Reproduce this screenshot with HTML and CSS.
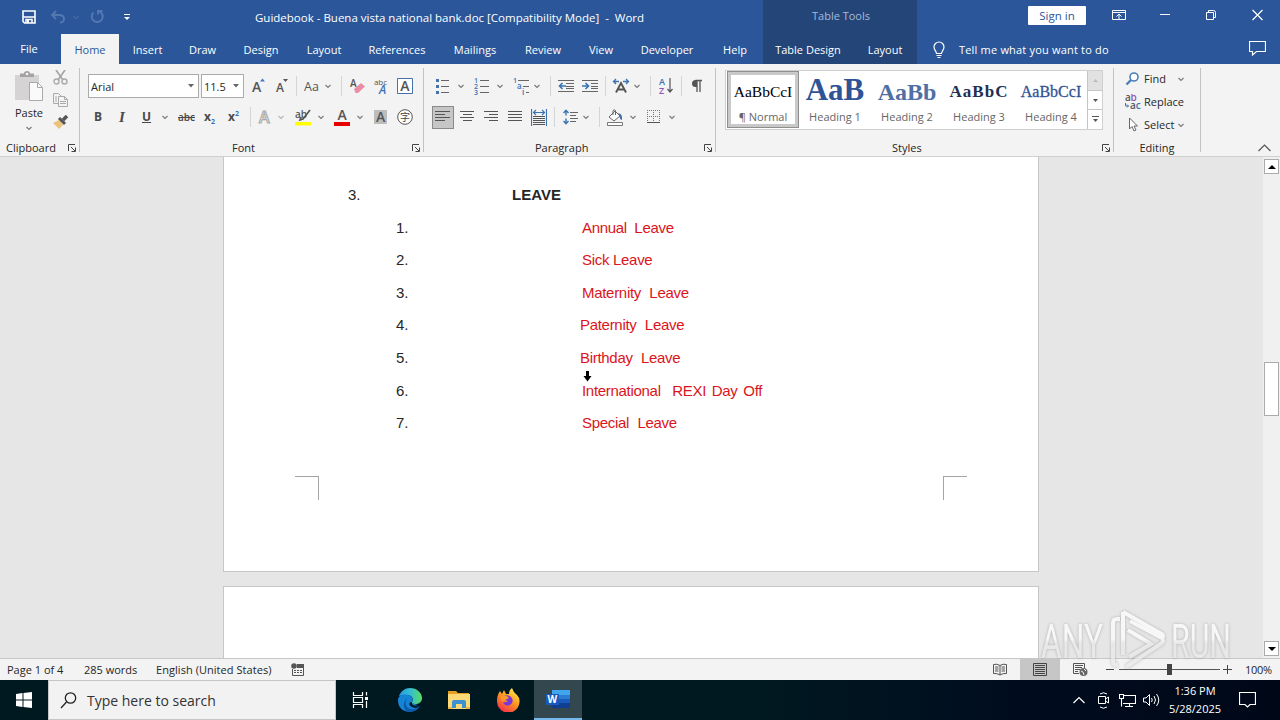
FILE: index.html
```html
<!DOCTYPE html>
<html lang="en">
<head>
  <meta charset="UTF-8">
  <meta name="viewport" content="width=device-width, initial-scale=1.0">
  <title>Guidebook - Buena vista national bank.doc - Word</title>
  <link rel="stylesheet" href="styles.css">
</head>
<body>
  <svg class="defs" width="0" height="0">
    <symbol id="caret" viewBox="0 0 8 8"><path d="M1.5 3l2.500 2.500L6.500 3" fill="none" stroke="#777" stroke-width="1.1"/></symbol>
    <symbol id="launcher" viewBox="0 0 8 8"><path d="M.5 7V.5H7M3 3l4 4M7.500 3.500v4h-4" fill="none" stroke="#444"/></symbol>
  </svg>

  <header class="header">
    <div class="titlebar">
      <div class="quick-access">
        <svg width="14" height="14" viewBox="0 0 14 14"><path d="M1 1h12v12H2.500L1 11.500z" fill="none" stroke="#fff" stroke-width="1.600"/><path d="M1 7h12M4 13V9.500h6V13" fill="none" stroke="#fff" stroke-width="1.500"/><path d="M5 10h2v3H5z" fill="#fff"/></svg>
        <svg width="14" height="14" viewBox="0 0 14 14"><path d="M5 1L1 5l4 4M1 5h7c3 0 5 1.500 5 4s-2 3.500-4 3.500" fill="none" stroke="#5578b3" stroke-width="1.900"/></svg>
        <svg width="8" height="8" viewBox="0 0 8 8"><path d="M1.500 3L4 5.500 6.500 3" fill="none" stroke="#5578b3"/></svg>
        <svg width="14" height="14" viewBox="0 0 14 14"><path d="M8 4.500V1h4.500M3.500 2.500a5.500 5.500 0 1 0 7.500 0L8.500 1" fill="none" stroke="#5578b3" stroke-width="1.900"/></svg>
        <svg width="8" height="8" viewBox="0 0 8 8"><path d="M1 1.500h6" stroke="#fff"/><path d="M1 4h6L4 7z" fill="#fff"/></svg>
      </div>
      <div class="doc-title">Guidebook - Buena vista national bank.doc [Compatibility Mode] &nbsp;- &nbsp;Word</div>
      <div class="table-tools">Table Tools</div>
      <div class="window-buttons">
        <button class="sign-in">Sign in</button>
        <svg width="14" height="12" viewBox="0 0 14 12"><path d="M.5 1.500h13v9H.5zM.5 3.500h13M7 10V5.500M4.500 7.500L7 5l2.500 2.500" fill="none" stroke="#fff"/></svg>
        <svg width="10" height="12" viewBox="0 0 10 12"><path d="M0 5.500h10" stroke="#fff"/></svg>
        <svg width="10" height="12" viewBox="0 0 10 12"><path d="M.5 3.500h7v7h-7zM2.500 3.500v-2h5q2 0 2 2v5h-2" fill="none" stroke="#fff"/></svg>
        <svg width="11" height="12" viewBox="0 0 11 12"><path d="M.5 1l10 10M10.500 1L.5 11" stroke="#fff" stroke-width="1.200"/></svg>
      </div>
    </div>
    <nav class="tabs">
      <a class="tab file">File</a>
      <a class="tab active">Home</a>
      <a class="tab">Insert</a>
      <a class="tab">Draw</a>
      <a class="tab">Design</a>
      <a class="tab">Layout</a>
      <a class="tab">References</a>
      <a class="tab">Mailings</a>
      <a class="tab">Review</a>
      <a class="tab">View</a>
      <a class="tab">Developer</a>
      <a class="tab">Help</a>
      <a class="tab context">Table Design</a>
      <a class="tab context">Layout</a>
      <div class="tell-me">
        <svg width="12" height="18" viewBox="0 0 12 18"><path d="M3.500 12.500c0-2-2.500-3.500-2.500-6.500a5 5 0 0 1 10 0c0 3-2.500 4.500-2.500 6.500zM3.500 14.500h5M4.500 16.500h3" fill="none" stroke="#fff" stroke-width="1.200"/></svg>
        <span>Tell me what you want to do</span>
      </div>
      <svg class="comment" width="17" height="15" viewBox="0 0 17 15"><path d="M.5.5h16v10H7.500l-4 3.500v-3.500h-3z" fill="none" stroke="#fff" stroke-width="1.200"/></svg>
    </nav>
  </header>

  <section class="ribbon">
    <div class="group clipboard">
      <div class="group-body">
        <div class="paste">
          <svg width="29" height="32" viewBox="0 0 29 32"><path d="M0 4h24v25H0z" fill="#d5d3d4"/><path d="M5 6V2.500h4Q9 0 12 0t3 2.500h4V6z" fill="#a3a3a3"/><circle cx="12" cy="3" r="1.300" fill="#f3f3f3"/><path d="M14.500 11.500h8l5 5v13h-13z" fill="#fafafa" stroke="#aaa"/><path d="M22.500 11.500v5h5" fill="none" stroke="#aaa"/></svg>
          <span>Paste</span>
          <svg width="8" height="8"><use href="#caret"/></svg>
        </div>
        <div class="clip-tools">
          <svg width="15" height="15" viewBox="0 0 15 15"><path d="M3 0l7 10M12 0L5 10" stroke="#a5a5a5" stroke-width="1.700"/><circle cx="3.500" cy="11.500" r="2.500" fill="none" stroke="#aaa" stroke-width="1.400"/><circle cx="11.500" cy="11.500" r="2.500" fill="none" stroke="#aaa" stroke-width="1.400"/></svg>
          <svg width="15" height="14" viewBox="0 0 15 14"><path d="M5.500 10.500h-5v-10h5l2.500 2.500M2 4h2M2 6h2M2 8h2M5.500 3.500h6l3 3v7h-9zM11.500 3.500v3h3M7 8.500h6M7 10.500h6" fill="none" stroke="#aaa"/></svg>
          <svg width="16" height="14" viewBox="0 0 16 14"><path d="M0 8l6-3 4 5-4 4z" fill="#efc27b"/><path d="M6 3l6 6" stroke="#555" stroke-width="3"/><path d="M10 5l4-4" stroke="#555" stroke-width="3.500"/></svg>
        </div>
      </div>
      <div class="group-label">Clipboard<svg width="8" height="8"><use href="#launcher"/></svg></div>
    </div>

    <div class="group font">
      <div class="tools font-top">
        <div class="combo">Arial<svg width="6" height="4"><path d="M0 0h6L3 3.500z" fill="#666"/></svg></div>
        <div class="combo size">11.5<svg width="6" height="4"><path d="M0 0h6L3 3.500z" fill="#666"/></svg></div>
        <svg width="16" height="18" viewBox="0 0 16 18"><text class="glyph" x="1" y="15" font-size="14">A</text><path d="M9 4.500h5l-2.500-3z" fill="#4472c4"/></svg>
        <svg width="16" height="18" viewBox="0 0 16 18"><text class="glyph" x="1" y="15" font-size="12">A</text><path d="M8 2h5l-2.500 3z" fill="#555"/></svg>
        <i class="sep"></i>
        <span class="change-case">Aa</span>
        <svg width="8" height="8"><use href="#caret"/></svg>
        <i class="sep"></i>
        <svg width="16" height="18" viewBox="0 0 16 18"><text class="glyph" x="0" y="10" font-size="10">A</text><path d="M4 12l7-6 4 3.500-7 6.500H5.500z" fill="#eb8ea5"/></svg>
        <svg width="16" height="20" viewBox="0 0 16 20"><text class="glyph thin" x="1" y="9" font-size="8" textLength="13">abc</text><text class="glyph blue" x="6" y="18" font-size="12" font-style="italic">A</text></svg>
        <svg width="16" height="18" viewBox="0 0 16 18"><path d="M.5 1.500h15v15H.5z" fill="#fff" stroke="#4472a8"/><text class="glyph" x="3.300" y="14" font-size="14">A</text></svg>
      </div>
      <div class="tools font-bottom">
        <b class="fmt">B</b>
        <i class="fmt serif">I</i>
        <u class="fmt">U</u>
        <svg width="8" height="8"><use href="#caret"/></svg>
        <s class="fmt strike">abc</s>
        <span class="fmt">x<sub>2</sub></span>
        <span class="fmt">x<sup>2</sup></span>
        <i class="sep"></i>
        <svg width="14" height="16" viewBox="0 0 14 16"><text x="1" y="13.500" font-family="Open Sans" font-weight="600" font-size="16" fill="#f8f8f8" stroke="#aaa" stroke-width="1.100">A</text></svg>
        <svg class="faded" width="8" height="8"><use href="#caret"/></svg>
        <svg width="17" height="18" viewBox="0 0 17 18"><text class="glyph" x="0" y="10" font-size="10">ab</text><path d="M15 2L8 11l-3 1 1-3" fill="none" stroke="#555" stroke-width="1.700"/><path d="M0 14h16v3.500H0z" fill="#ff0"/></svg>
        <svg width="8" height="8"><use href="#caret"/></svg>
        <svg width="16" height="18" viewBox="0 0 16 18"><text class="glyph" x="3.500" y="12" font-size="14">A</text><path d="M0 14h16v4H0z" fill="#e60000"/></svg>
        <svg width="8" height="8"><use href="#caret"/></svg>
        <svg width="15" height="16" viewBox="0 0 15 16"><path d="M1 1h13v14H1z" fill="#bdbdbd"/><text class="glyph" x="3" y="13" font-size="14">A</text></svg>
        <svg width="16" height="16" viewBox="0 0 16 16"><circle cx="8" cy="8" r="7.300" fill="#fff" stroke="#555"/><text x="3" y="12" font-family="Noto Sans CJK SC, sans-serif" font-size="10" fill="#444">字</text></svg>
      </div>
      <div class="group-label">Font<svg width="8" height="8"><use href="#launcher"/></svg></div>
    </div>

    <div class="group paragraph">
      <div class="tools para-top">
        <svg width="16" height="16" viewBox="0 0 16 16"><path d="M2 1h3v3H2zM2 7h3v3H2zM2 13h3v3H2z" fill="#4472a8"/><path d="M7 2.500h8M7 8.500h8M7 14.500h8" stroke="#666"/></svg>
        <svg width="8" height="8"><use href="#caret"/></svg>
        <svg width="16" height="18" viewBox="0 0 16 18"><text class="glyph blue" x="1" y="6" font-size="7">1</text><text class="glyph blue" x="1" y="12" font-size="7">2</text><text class="glyph blue" x="1" y="18" font-size="7">3</text><path d="M7 3.500h9M7 9.500h9M7 15.500h9" stroke="#666"/></svg>
        <svg width="8" height="8"><use href="#caret"/></svg>
        <svg width="18" height="18" viewBox="0 0 18 18"><text class="glyph blue" x="0" y="6" font-size="7">1</text><text class="glyph blue" x="4" y="12" font-size="8">a</text><text class="glyph blue" x="9" y="18" font-size="8">i</text><path d="M5 3.500h11M10 9.500h6M13 15.500h3" stroke="#666"/></svg>
        <svg width="8" height="8"><use href="#caret"/></svg>
        <i class="sep"></i>
        <svg width="16" height="14" viewBox="0 0 16 14"><path d="M0 1.500h16M8 4.500h8M8 7.500h8M8 9.500h8M0 12.500h16" stroke="#666"/><path d="M8 7H1.500M4.500 4l-3 3 3 3" fill="none" stroke="#3973b5" stroke-width="1.600"/></svg>
        <svg width="16" height="14" viewBox="0 0 16 14"><path d="M0 1.500h16M9 4.500h7M9 7.500h7M9 9.500h7M0 12.500h16" stroke="#666"/><path d="M0 7h6.500M3.500 4l3 3-3 3" fill="none" stroke="#3973b5" stroke-width="1.600"/></svg>
        <i class="sep"></i>
        <svg width="18" height="16" viewBox="0 0 18 16"><path d="M4 14.500L9 5l5 9.500M5.500 11.500h7" fill="none" stroke="#555" stroke-width="1.900"/><path d="M7 3.500H2M4 1L1.500 3.500 4 6M11 3.500h5M14 1l2.500 2.500L14 6" fill="none" stroke="#3973b5" stroke-width="1.300"/></svg>
        <svg width="8" height="8"><use href="#caret"/></svg>
        <i class="sep"></i>
        <svg width="16" height="18" viewBox="0 0 16 18"><text class="glyph blue" x="1" y="8" font-size="9">A</text><text class="glyph purple" x="1" y="17" font-size="9">Z</text><path d="M12 1v14M9.500 12l2.500 3 2.500-3" fill="none" stroke="#555" stroke-width="1.200"/></svg>
        <i class="sep"></i>
        <svg width="12" height="14" viewBox="0 0 12 14"><path d="M6 1v12M9 1v12M11 1.500H4.500" fill="none" stroke="#555" stroke-width="1.300"/><path d="M6 1H4.500a3.500 3.500 0 0 0 0 7H6z" fill="#555"/></svg>
      </div>
      <div class="tools para-bottom">
        <div class="pressed"><svg width="16" height="12" viewBox="0 0 16 12"><path d="M0 .5h15M0 3.500h10M0 6.500h15M0 9.500h10" stroke="#555"/></svg></div>
        <svg width="15" height="12" viewBox="0 0 15 12"><path d="M0 .5h14M3 3.500h9M0 6.500h14M3 9.500h9" stroke="#555"/></svg>
        <svg width="15" height="12" viewBox="0 0 15 12"><path d="M0 .5h14M5 3.500h9M0 6.500h14M5 9.500h9" stroke="#555"/></svg>
        <svg width="15" height="12" viewBox="0 0 15 12"><path d="M0 .5h14M0 3.500h14M0 6.500h14M0 9.500h14" stroke="#555"/></svg>
        <svg width="16" height="17" viewBox="0 0 16 17"><path d="M.5 0v17M15.500 0v17M2.500 3.500h11M5 1L2.500 3.500 5 6M11 1l2.500 2.500L11 6" fill="none" stroke="#3973b5" stroke-width="1.200"/><path d="M2 7.500h12M2 9.500h12M2 11.500h12M2 13.500h12M2 15.500h12" stroke="#555"/></svg>
        <i class="sep"></i>
        <svg width="15" height="16" viewBox="0 0 15 16"><path d="M3 1v5.500M.5 4L3 1.200 5.500 4M3 9.500V15M.5 12L3 14.800 5.500 12" fill="none" stroke="#3973b5" stroke-width="1.400"/><path d="M7 3.500h8M7 6.500h6M7 9.500h8M7 12.500h6" stroke="#666"/></svg>
        <svg width="8" height="8"><use href="#caret"/></svg>
        <i class="sep"></i>
        <svg width="17" height="17" viewBox="0 0 17 17"><path d="M2 8l6-6 5 5-6 5zM6 6V1.500Q7 0 8.500 1.500V6" fill="#fff" stroke="#666"/><path d="M11 4q5 1 4 7-3-1-2-4z" fill="#4472a8"/><path d="M.5 13.500h15v3H.5z" fill="#fff" stroke="#777"/></svg>
        <svg width="8" height="8"><use href="#caret"/></svg>
        <svg width="14" height="14" viewBox="0 0 14 14"><path d="M.5 0v13M12.500 0v13M0 .5h13M6.500 0v13M0 6.500h13" stroke="#777" stroke-dasharray="1 1"/><path d="M0 12.500h13" stroke="#555"/></svg>
        <svg width="8" height="8"><use href="#caret"/></svg>
      </div>
      <div class="group-label">Paragraph<svg width="8" height="8"><use href="#launcher"/></svg></div>
    </div>

    <div class="group styles">
      <div class="gallery">
        <div class="style selected"><span class="preview normal">AaBbCcI</span><span class="name">¶ Normal</span></div>
        <div class="style"><span class="preview h1">AaB</span><span class="name">Heading 1</span></div>
        <div class="style"><span class="preview h2">AaBb</span><span class="name">Heading 2</span></div>
        <div class="style"><span class="preview h3">AaBbC</span><span class="name">Heading 3</span></div>
        <div class="style"><span class="preview h4">AaBbCcI</span><span class="name">Heading 4</span></div>
        <div class="gallery-scroll">
          <div class="off"><svg width="5" height="3"><path d="M0 3h5L2.500 0z" fill="#bbb"/></svg></div>
          <div><svg width="5" height="3"><path d="M0 0h5L2.500 3z" fill="#555"/></svg></div>
          <div><svg width="7" height="7"><path d="M0 .5h7" stroke="#555"/><path d="M1 3h5L3.500 6z" fill="#555"/></svg></div>
        </div>
      </div>
      <div class="group-label">Styles<svg width="8" height="8"><use href="#launcher"/></svg></div>
    </div>

    <div class="group editing">
      <div class="edit-list">
        <div class="edit-item find"><svg width="16" height="14" viewBox="0 0 16 14"><circle cx="9" cy="5" r="4" fill="#fff" stroke="#4a7ebb" stroke-width="1.600"/><path d="M6 8l-4.500 4.500" stroke="#4a7ebb" stroke-width="2.400"/></svg><span>Find</span><svg width="8" height="8"><use href="#caret"/></svg></div>
        <div class="edit-item replace"><svg width="16" height="16" viewBox="0 0 16 16"><text class="glyph" x="0" y="7" font-size="10">a</text><text class="glyph purple" x="5.500" y="7" font-size="10">b</text><text class="glyph" x="5" y="15" font-size="10">a</text><text class="glyph blue" x="10.800" y="15" font-size="10">c</text><path d="M.5 9v3h3M2 10.500L3.500 12 2 13.500" fill="none" stroke="#3973b5"/></svg><span>Replace</span></div>
        <div class="edit-item select"><svg width="16" height="15" viewBox="0 0 16 15"><path d="M4.500 1v11l2.500-2.500 2 4.500 2-1-2-4h3.500z" fill="#fff" stroke="#666"/></svg><span>Select</span><svg width="8" height="8"><use href="#caret"/></svg></div>
      </div>
      <div class="group-label">Editing</div>
    </div>
    <svg class="collapse" width="13" height="8" viewBox="0 0 13 8"><path d="M.5 7l6-6 6 6" fill="none" stroke="#555" stroke-width="1.200"/></svg>
  </section>

  <main class="workspace">
    <div class="canvas">
      <article class="page first">
        <div class="line heading"><span class="num">3.</span><span>LEAVE</span></div>
        <div class="line item annual"><span class="num">1.</span><span>Annual Leave</span></div>
        <div class="line item sick"><span class="num">2.</span><span>Sick Leave</span></div>
        <div class="line item"><span class="num">3.</span><span>Maternity Leave</span></div>
        <div class="line item outdent"><span class="num">4.</span><span>Paternity Leave</span></div>
        <div class="line item outdent"><span class="num">5.</span><span>Birthday Leave</span></div>
        <div class="line item international"><span class="num">6.</span><span>International&nbsp; REXI Day Off</span></div>
        <div class="line item"><span class="num">7.</span><span>Special Leave</span></div>
        <div class="crop-marks"><i class="mark left"></i><i class="mark right"></i></div>
        <svg class="pointer" width="9" height="11" viewBox="0 0 9 11"><path d="M3 0h3v5h2.500L4.500 10.500.5 5H3z"/></svg>
      </article>
      <article class="page"></article>
    </div>
    <div class="scrollbar">
      <div class="arrow"><svg width="8" height="4"><path d="M0 4h8L4 0z"/></svg></div>
      <div class="thumb"></div>
      <div class="arrow"><svg width="8" height="4"><path d="M0 0h8L4 4z"/></svg></div>
    </div>
  </main>

  <footer class="statusbar">
    <span class="page-count">Page 1 of 4</span>
    <span class="words">285 words</span>
    <span class="language">English (United States)</span>
    <svg class="macro" width="14" height="14" viewBox="0 0 14 14"><path d="M6 1h7v4H6z" fill="#555"/><path d="M1.500 6v6.500h11V4" fill="none" stroke="#555"/><circle cx="3" cy="3" r="2.800" fill="#555"/><path d="M3 7.500h9M3 9.500h9" stroke="#555" stroke-dasharray="2 1"/></svg>
    <div class="views">
      <div class="view"><svg width="14" height="13" viewBox="0 0 14 13"><path d="M7 2.500Q4 .5.500 1.500v9Q4 10 7 12q3-2 6.500-1.500v-9Q10 .5 7 2.500V12M2 4h3.500M2 6h3.500M2 8h3.500M8.500 4H12M8.500 6H12M8.500 8H12" fill="none" stroke="#555"/></svg></div>
      <div class="view on"><svg width="14" height="13" viewBox="0 0 14 13"><path d="M.5.500h13v12H.5zM2 2.500h10M2 4.500h10M2 6.500h10M2 8.500h10M2 10.500h10" fill="none" stroke="#444"/></svg></div>
      <div class="view"><svg width="15" height="13" viewBox="0 0 15 13"><path d="M6 10.500H.5V.5h11V5M2 2.500h8M2 4.500h7M2 6.500h5M2 8.500h3" fill="none" stroke="#555"/><circle cx="10.500" cy="9" r="4" fill="#666"/><path d="M8 8l2 1 1 3M11 6l2 2" stroke="#eee" fill="none"/></svg></div>
    </div>
    <div class="zoom">
      <svg width="8" height="9"><path d="M0 4.500h8" stroke="#444"/></svg>
      <div class="slider"><i class="handle"></i></div>
      <svg width="9" height="9"><path d="M0 4.500h9M4.500 0v9" stroke="#444"/></svg>
      <span>100%</span>
    </div>
  </footer>

  <footer class="taskbar">
    <div class="start"><svg width="16" height="16" viewBox="0 0 16 16"><path d="M0 2l6.500-1v6.500H0zM7.500 1L16 0v7.500H7.500zM0 8.500h6.500V15L0 14zM7.500 8.500H16V16l-8.500-1z" fill="#fff"/></svg></div>
    <div class="search"><svg width="17" height="17" viewBox="0 0 17 17"><circle cx="10.500" cy="6" r="5.200" fill="none" stroke="#222" stroke-width="1.300"/><path d="M6.500 10L1 16" stroke="#222" stroke-width="1.300"/></svg><span>Type here to search</span></div>
    <div class="app"><svg width="17" height="16" viewBox="0 0 17 16"><path d="M1.500 0v3.500h9V0M1.500 16v-3.500h9V16M1.500 5.500h9v5h-9zM14.500 0v3.500M14.500 9v7" fill="none" stroke="#fff" stroke-width="1.200"/><path d="M13 5h3v3h-3z" fill="#fff"/></svg></div>
    <div class="app"><svg width="24" height="24" viewBox="0 0 24 24">
      <defs><linearGradient id="edge-top"><stop offset="0" stop-color="#2a9be0"/><stop offset=".5" stop-color="#35bdcf"/><stop offset="1" stop-color="#5bdb62"/></linearGradient></defs>
      <path d="M1 8C3 3 7 0 12 0c7 0 12 5 12 10 0 4-3 6-7 6-3 0-4-1-3-2 2-3 0-7-5-7-4 0-7 1-8 1z" fill="url(#edge-top)"/><path d="M0 12C0 8 4 6 8 6.500c5 .5 8 4 6 7.500-1 1 0 2 3 2l5 2c-4 6-10 7-15 5C2 21 0 17 0 12z" fill="#1583d6"/><path d="M10 10c-3 2-3 6-1 9 3 3 8 3 13-1-2 4-7 6.500-12 6-5-2-6-11 0-14z" fill="#0d5aa8"/><path d="M14 14c-1 2 1 3.500 4 3.500 2 0 4-1 5-2l-1.500 3c-3 2-7 1.500-9-.5-2-2-1-4 1.500-4z" fill="#001820"/></svg></div>
    <div class="app"><svg width="22" height="18" viewBox="0 0 22 18"><path d="M0 0h8l2 2h11v4H0z" fill="#e5a020"/><path d="M0 3h22v15H0z" fill="#fbd977"/><path d="M4 17v-6q0-2 2-2h10q2 0 2 2v6h-4v-4H8v4z" fill="#3d91d0"/><path d="M0 16h4v2H0zM18 16h4v2h-4z" fill="#efb83e"/></svg></div>
    <div class="app"><svg width="24" height="24" viewBox="0 0 24 24">
      <defs><linearGradient id="fox" x1=".8" y1="0" x2=".2" y2="1"><stop offset="0" stop-color="#fff14f"/><stop offset=".45" stop-color="#ff9a1f"/><stop offset="1" stop-color="#f3264f"/></linearGradient></defs>
      <path d="M4 3l2 3 2-4 2 4 3 0q0-4 3-6 1 4 5 7 3 3 2.500 7A11 11 0 0 1 1 13Q1 7 4 3z" fill="url(#fox)"/><path d="M8 8q5-2 8 2 2 5-2 7-5 2-7-3 3 1 5-1-3 0-4-5z" fill="#7a38d6"/><path d="M5 9q2-2 6-1l2 2q-2 1-4 2-2 3-4 0z" fill="#ff9a2a"/></svg></div>
    <div class="app running"><svg width="24" height="20" viewBox="0 0 24 20"><path d="M6 1h18v6H6z" fill="#41a5ee"/><path d="M6 6h18v4H6z" fill="#2b7cd3"/><path d="M6 10h18v5H6z" fill="#185abd"/><path d="M6 14h18v5H6z" fill="#103f91"/><path d="M0 5h13v11H0z" fill="#185abd"/><text x="1.500" y="14" font-family="Open Sans" font-size="10" font-weight="700" fill="#fff">W</text></svg></div>
    <div class="tray">
      <svg width="12" height="8" viewBox="0 0 12 8"><path d="M.5 7L6 1.500 11.500 7" fill="none" stroke="#fff" stroke-width="1.200"/></svg>
      <svg width="12" height="17" viewBox="0 0 12 17"><path d="M.5 4.500h7v7h-7zM7.500 7l3-2v6l-3-2M2 2q3.500-2.500 7 0M2 15q3.500 2.500 7 0" fill="none" stroke="#fff"/></svg>
      <svg width="17" height="15" viewBox="0 0 17 15"><path d="M5 2.500h11.500v8H4M.5 1.500h4v4h-4zM2.500 5.500v8M10.500 10.500v3M6 13.500h8" fill="none" stroke="#fff" stroke-width="1.100"/></svg>
      <svg width="17" height="14" viewBox="0 0 17 14"><path d="M.5 5v4h2.500l3.500 3.500v-11L3 5zM8.500 5q1.500 2 0 4M11 3q3 4 0 8M13.500 1q4.500 6 0 12" fill="none" stroke="#fff"/></svg>
      <div class="clock"><span>1:36 PM</span><span>5/28/2025</span></div>
      <svg width="17" height="16" viewBox="0 0 17 16"><path d="M.5.5h16v12H11L8.500 15 6 12.500H.5z" fill="none" stroke="#fff" stroke-width="1.200"/></svg>
    </div>
  </footer>

  <svg class="watermark" width="200" height="70" viewBox="0 0 200 70">
    <defs><linearGradient id="fade" gradientUnits="userSpaceOnUse" x1="0" y1="30" x2="0" y2="34"><stop offset="0" stop-color="#fff"/><stop offset="1" stop-color="#e9e9e9"/></linearGradient></defs>
    <text x="3" y="49" textLength="62" lengthAdjust="spacingAndGlyphs">ANY</text>
    <path d="M82 10h-3q-4 0-4 4v38q0 4 5 4M85 3v43M85 3l39 22q2 2 0 4l-32-17M124 30q2 2 0 4L88 58M91 48l22-13L90 21"/>
    <text x="133" y="49" textLength="60" lengthAdjust="spacingAndGlyphs">RUN</text>
  </svg>
</body>
</html>
```

FILE: styles.css
```css
* {
  box-sizing: border-box;
}

body {
  margin: 0;
  width: 1280px;
  height: 720px;
  overflow: hidden;
  position: relative;
  display: flex;
  flex-direction: column;
  font-family: "Open Sans", "Noto Sans", sans-serif;
  font-size: 11px;
  color: #262626;
}

svg {
  display: block;
  flex: none;
}

.defs {
  position: absolute;
}

/* Title bar and tabs */
.header {
  height: 64px;
  background: #2b579a;
  color: #fff;
}

.titlebar {
  height: 34px;
  display: flex;
}

.quick-access {
  width: 255px;
  padding-left: 22px;
  display: grid;
  grid-template-columns: 29px 21px 18px 33px 8px;
  align-items: center;
}

.doc-title {
  width: 508px;
  line-height: 35px;
  font-size: 11.5px;
  white-space: nowrap;
}

.table-tools {
  width: 154px;
  padding-left: 2px;
  background: #234578;
  color: #a6bbdc;
  text-align: center;
  line-height: 32px;
}

.window-buttons {
  padding: 0 0 4px 111px;
  display: grid;
  grid-template-columns: 84px 48px 46px 46px 11px;
  align-items: center;
}

.sign-in {
  width: 58px;
  height: 19px;
  padding: 0;
  border: none;
  border-radius: 1px;
  background: #fff;
  color: #2b579a;
  font: 11.5px "Open Sans", sans-serif;
}

.tabs {
  height: 30px;
  display: grid;
  grid-template-columns: 61px 58px 57px 53px 64px 62px 84px 72px 64px 52px 80px 56px 90px 64px 332px 17px;
}

.tab {
  text-align: center;
  line-height: 32px;
  white-space: nowrap;
}

.tab.file {
  padding-right: 3px;
  line-height: 30px;
}

.tab.active {
  background: #f3f3f3;
  color: #2b579a;
}

.tab.context {
  background: #234578;
}

.tell-me {
  display: flex;
  align-items: center;
  padding-left: 16px;
  gap: 14px;
  letter-spacing: 0.19px;
}

.tell-me span {
  padding-bottom: 2px;
}

.comment {
  margin-top: 7px;
}

/* Ribbon */
.ribbon {
  height: 93px;
  display: flex;
  background: #f3f3f3;
  border-bottom: 1px solid #d0d0d0;
}

.group {
  height: 84px;
  margin-top: 4px;
  border-right: 1px solid #c3c3c3;
  display: flex;
  flex-direction: column;
}

.group-label {
  margin-top: auto;
  margin-bottom: -4px;
  height: 16px;
  line-height: 16px;
  display: flex;
  align-items: center;
  justify-content: space-between;
  padding-right: 3px;
}

.clipboard {
  width: 80px;
}

.clipboard .group-label {
  padding-left: 6px;
}

.group-body {
  display: flex;
}

.paste {
  width: 53px;
  padding: 3px 0 0 5px;
  display: flex;
  flex-direction: column;
  align-items: center;
}

.paste span {
  line-height: 14px;
  margin: 3px 0 4px;
}

.clip-tools {
  padding-top: 2px;
  display: flex;
  flex-direction: column;
  gap: 8px;
}

.font {
  width: 344px;
}

.font .group-label {
  padding-left: 152px;
}

.tools {
  display: grid;
  align-items: center;
}

.font-top {
  margin: 6px 0 0 8px;
  height: 24px;
  grid-template-columns: 113px 50px 24px 21px 8px 20px 17px 9px 23px 24px 16px;
}

.combo {
  width: 111px;
  height: 24px;
  padding: 0 4px 0 2px;
  border: 1px solid #ababab;
  background: #fff;
  display: flex;
  align-items: center;
  justify-content: space-between;
}

.combo.size {
  width: 43px;
}

.sep {
  width: 1px;
  height: 20px;
  background: #d5d5d5;
}

.change-case {
  font-size: 12.5px;
  color: #555;
}

.glyph {
  font-family: "Open Sans", sans-serif;
  font-weight: 600;
  fill: #555;
}

.glyph.thin {
  font-weight: 400;
}

.glyph.blue {
  fill: #3973b5;
}

.glyph.purple {
  fill: #9455b5;
}

.font-bottom {
  margin: 7px 0 0 14px;
  height: 24px;
  grid-template-columns: 25px 23px 19px 17px 26px 24px 22px 8px 19px 18px 22px 17px 22px 17px 24px 16px;
}

.fmt {
  font-size: 12px;
  line-height: 16px;
  font-weight: 700;
  color: #4a4a4a;
}

.fmt.serif {
  font-family: "Liberation Serif", serif;
  font-size: 15px;
}

.fmt.strike {
  font-size: 10px;
  font-weight: 600;
}

.fmt sub,
.fmt sup {
  font-size: 7px;
  line-height: 0;
  color: #3973b5;
}

.faded {
  opacity: 0.5;
}

.paragraph {
  width: 292px;
}

.paragraph .group-label {
  padding-left: 111px;
}

.para-top {
  margin: 6px 0 0 10px;
  height: 24px;
  grid-template-columns: 23px 16px 23px 17px 20px 17px 8px 24px 23px 7px 21px 17px 8px 23px 10px 12px;
}

.para-bottom {
  margin: 7px 0 0 8px;
  height: 24px;
  grid-template-columns: 28px 24px 24px 23px 23px 9px 19px 17px 8px 22px 18px 21px 8px;
}

.pressed {
  width: 22px;
  height: 23px;
  border: 1px solid #8a8a8a;
  background: #c6c6c6;
  display: flex;
  align-items: center;
  justify-content: center;
}

.styles {
  width: 398px;
}

.styles .group-label {
  padding-left: 176px;
}

.gallery {
  margin: 2px 0 0 9px;
  width: 378px;
  height: 60px;
  padding-left: 1px;
  display: flex;
  background: #fff;
  border: 1px solid #d0d0d0;
}

.style {
  width: 72px;
  display: flex;
  flex-direction: column;
  align-items: center;
}

.style.selected {
  border: 1px solid #8f8f8f;
  box-shadow: inset 0 0 0 3px #c9c9c9;
  height: 57px;
}

.preview {
  height: 36px;
  line-height: 42px;
  font-family: "Liberation Serif", serif;
  white-space: nowrap;
}

.normal {
  font-size: 15.5px;
  color: #000;
  line-height: 40px;
}

.h1 {
  font-size: 31px;
  font-weight: 700;
  color: #2f5496;
  line-height: 37px;
}

.h2 {
  font-size: 24px;
  font-weight: 700;
  color: #4f6fa5;
}

.h3 {
  font-size: 17px;
  font-weight: 700;
  letter-spacing: 1px;
  color: #1f2f55;
}

.h4 {
  font-size: 16px;
  color: #2f5496;
  -webkit-text-stroke: 0.3px #2f5496;
}

.name {
  line-height: 17px;
  margin-top: 1px;
  color: #666;
  white-space: nowrap;
}

.selected .name {
  margin-top: 0;
}

.gallery-scroll {
  width: 15px;
  display: flex;
  flex-direction: column;
}

.gallery-scroll div {
  flex: 1;
  display: flex;
  align-items: center;
  justify-content: center;
  border-left: 1px solid #c6c6c6;
  border-top: 1px solid #c6c6c6;
}

.gallery-scroll .off {
  background: #e1e1e1;
  border-top: none;
}

.editing {
  width: 87px;
}

.editing .group-label {
  justify-content: center;
  padding-right: 0;
}

.edit-list {
  height: 68px;
  padding: 0 0 0 11px;
  margin-top: -1px;
}

.edit-item {
  height: 23px;
  display: flex;
  align-items: center;
}

.edit-item span {
  padding-left: 3px;
}

.find svg:last-child {
  margin-left: 11px;
}

.select svg:last-child {
  margin-left: 3px;
}

.collapse {
  margin: 80px 0 0 57px;
}

/* Document area */
.workspace {
  height: 501px;
  display: flex;
  background: #e6e6e6;
}

.canvas {
  width: 1263px;
  padding-left: 223px;
  overflow: hidden;
}

.page {
  width: 816px;
  height: 200px;
  background: #fff;
  border: 1px solid #c6c6c6;
  font-family: "Liberation Sans", Arial, sans-serif;
  font-size: 15px;
}

.page.first {
  position: relative;
  height: 415px;
  margin-bottom: 14px;
  padding-top: 22px;
  border-top: none;
}

.line {
  display: flex;
  height: 32.6px;
  line-height: 32px;
  padding-left: 172px;
  white-space: nowrap;
}

.line .num {
  width: 186px;
}

.line.heading {
  padding-left: 124px;
  font-weight: 700;
}

.heading .num {
  width: 164px;
  font-weight: 400;
}

.item span:last-child {
  color: #dc1420;
  letter-spacing: -0.3px;
  word-spacing: 4.5px;
}

.item.annual span:last-child {
  word-spacing: 3.6px;
}

.item.sick span:last-child {
  word-spacing: 0;
}

.item.international span:last-child {
  word-spacing: 1.9px;
}

.outdent .num {
  width: 184px;
}

.crop-marks {
  display: flex;
  justify-content: space-between;
  margin: 36px 71px 0;
}

.mark {
  width: 24px;
  height: 24px;
  border-top: 1px solid #a5a5a5;
}

.mark.left {
  border-right: 1px solid #a5a5a5;
}

.mark.right {
  border-left: 1px solid #a5a5a5;
}

.pointer {
  position: absolute;
  left: 359px;
  top: 214px;
}

.scrollbar {
  width: 17px;
  padding: 2px 1px;
  background: #f0f0f0;
  display: flex;
  flex-direction: column;
}

.arrow {
  width: 15px;
  height: 15px;
  border: 1px solid #ababab;
  background: #fff;
  display: flex;
  align-items: center;
  justify-content: center;
}

.thumb {
  width: 15px;
  height: 54px;
  margin: 188px 0 225px;
  border: 1px solid #ababab;
  background: #fff;
}

/* Status bar */
.statusbar {
  height: 22px;
  display: flex;
  align-items: center;
  background: #f3f3f3;
  border-top: 1px solid #c6c6c6;
  white-space: nowrap;
}

.page-count {
  width: 84px;
  padding-left: 7px;
}

.words {
  width: 72px;
}

.language {
  width: 135px;
  letter-spacing: 0.05px;
}

.views {
  display: flex;
  margin-left: 675px;
  height: 22px;
}

.view {
  width: 40px;
  display: flex;
  align-items: center;
  justify-content: center;
}

.view.on {
  background: #c6c6c6;
}

.zoom {
  display: flex;
  align-items: center;
  margin-left: 6px;
}

.slider {
  width: 101px;
  height: 11px;
  margin: 0 3px 0 5px;
  background: linear-gradient(#555, #555) center / 100% 1px no-repeat;
}

.handle {
  display: block;
  width: 5px;
  height: 11px;
  margin-left: 48px;
  background: #444;
}

.zoom span {
  margin-left: 13px;
  letter-spacing: -0.3px;
}

/* Taskbar */
.taskbar {
  height: 40px;
  display: flex;
  background: linear-gradient(90deg, #001820 0%, #001820 60%, #000c1e 80%, #000818 100%);
  color: #fff;
}

.start {
  width: 48px;
  display: flex;
  align-items: center;
  justify-content: center;
}

.search {
  width: 288px;
  display: flex;
  align-items: center;
  gap: 10px;
  padding-left: 11px;
  background: #f2f2f2;
  border: 1px solid #c6c6c6;
  color: #333;
  font-size: 14px;
}

.app {
  width: 49px;
  display: flex;
  align-items: center;
  justify-content: center;
}

.app.running {
  width: 48px;
  margin-left: 2px;
  background: #33474f;
  border-bottom: 2px solid #76b9ed;
}

.tray {
  margin-left: auto;
  width: 207px;
  display: grid;
  grid-template-columns: 25px 21px 24px 22px 74px 17px;
  align-items: center;
}

.clock {
  display: flex;
  flex-direction: column;
  align-items: center;
  padding-right: 14px;
  line-height: 18px;
}

/* Overlay logo above the status bar */
.watermark {
  position: absolute;
  left: 1038px;
  top: 609px;
  opacity: 0.7;
  filter: drop-shadow(0 0 1.5px #999);
}

.watermark text {
  font-family: Roboto, sans-serif;
  font-weight: 400;
  font-size: 49px;
  fill: url(#fade);
}

.watermark path {
  fill: none;
  stroke: url(#fade);
  stroke-width: 4;
}
```
